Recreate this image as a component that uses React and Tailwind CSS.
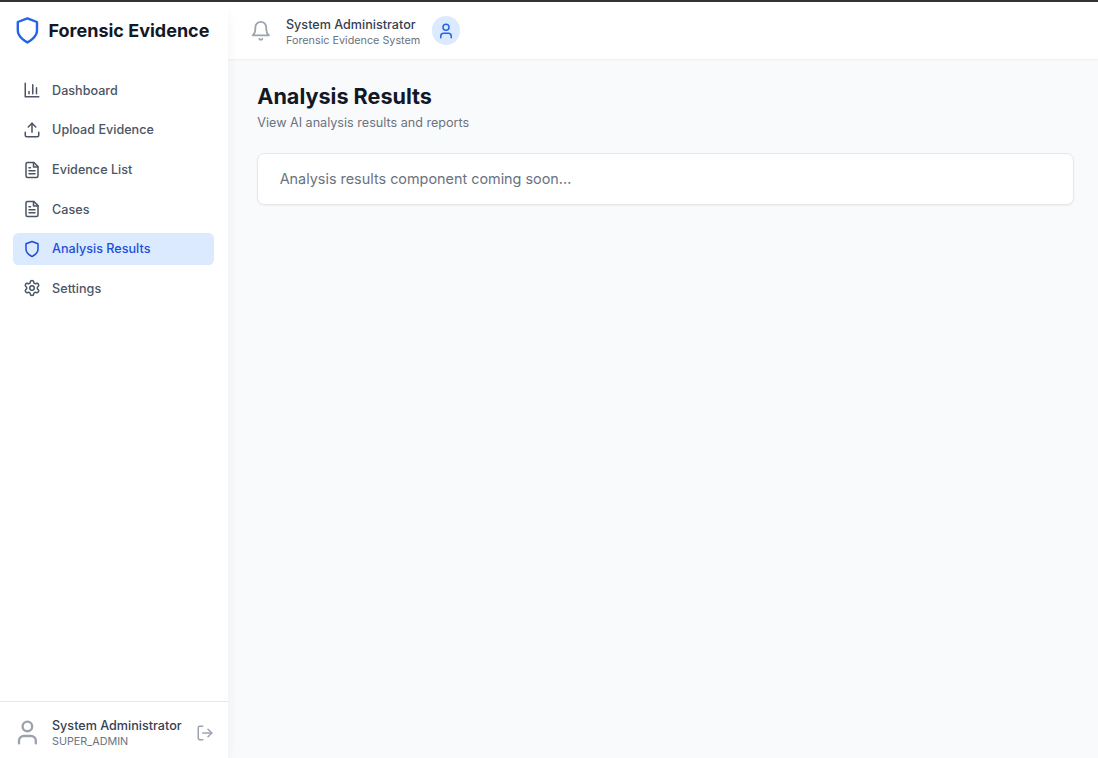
import React from "react";
import { LogOut, Settings, Upload, User } from "lucide-react";

function Icon({ className, children }) {
  return (
    <svg className={className} viewBox="0 0 24 24" fill="none" stroke="currentColor" strokeWidth="2" strokeLinecap="round" strokeLinejoin="round">
      {children}
    </svg>
  );
}

function BarChart({ className }) {
  return (
    <Icon className={className}>
      <path d="M3 3v18h18M18 17V9M13 17V5M8 17v-3" />
    </Icon>
  );
}

function Shield({ className }) {
  return (
    <Icon className={className}>
      <path d="M12 22s8-4 8-10V5l-8-3-8 3v7c0 6 8 10 8 10" />
    </Icon>
  );
}

function Bell({ className }) {
  return (
    <Icon className={className}>
      <path d="M6 8a6 6 0 0 1 12 0c0 7 3 9 3 9H3s3-2 3-9" />
      <path d="M10.3 21a1.94 1.94 0 0 0 3.4 0" />
    </Icon>
  );
}

function FileText({ className }) {
  return (
    <Icon className={className}>
      <path d="M14.5 2H6a2 2 0 0 0-2 2v16a2 2 0 0 0 2 2h12a2 2 0 0 0 2-2V7.5L14.5 2z" />
      <path d="M14 2v6h6M16 13H8M16 17H8M10 9H8" />
    </Icon>
  );
}

const items = [
  { label: "Dashboard", ItemIcon: BarChart },
  { label: "Upload Evidence", ItemIcon: Upload },
  { label: "Evidence List", ItemIcon: FileText },
  { label: "Cases", ItemIcon: FileText },
  { label: "Analysis Results", ItemIcon: Shield, active: true },
  { label: "Settings", ItemIcon: Settings },
];

function Sidebar() {
  return (
    <aside className="z-10 flex w-[228.4px] shrink-0 flex-col bg-white shadow-[0_9px_13.5px_-2.7px_rgba(0,0,0,0.1),0_3.6px_5.4px_-3.6px_rgba(0,0,0,0.1)]">
      <div className="flex h-[57.6px] shrink-0 items-center pl-[12.6px]">
        <Shield className="size-[28.8px] shrink-0 text-[#2563eb]" />
        <h1 className="ml-[7.1px] whitespace-nowrap text-[18px] font-bold leading-[25.2px] text-[#111827]">Forensic Evidence</h1>
      </div>
      <nav className="mt-[14.6px] flex flex-1 flex-col gap-[7.2px] pl-[12.5px] pr-[14.4px]">
        {items.map(({ label, ItemIcon, active }) => (
          <a
            key={label}
            className={`flex h-[32.4px] items-center gap-[10.8px] rounded-[5.4px] px-[10.8px] text-[12.6px] font-medium ${active ? "bg-[#dbeafe] text-[#1d4ed8]" : "text-[#4b5563]"}`}
          >
            <ItemIcon className="size-[18px] shrink-0" />
            <span className="pt-[1.8px]">{label}</span>
          </a>
        ))}
      </nav>
      <div className="flex h-[56.7px] shrink-0 items-center border-t border-[#e5e7eb] pl-[12.6px] pr-[14.4px] pt-[5px]">
        <User className="size-[28.8px] shrink-0 text-[#9ca3af]" />
        <div className="ml-[10.6px] flex-1 whitespace-nowrap pt-[2px]">
          <p className="text-[12.6px] font-medium leading-[18px] text-[#374151]">System Administrator</p>
          <p className="text-[10.8px] leading-[14.4px] text-[#6b7280]">SUPER_ADMIN</p>
        </div>
        <LogOut className="size-[18px] shrink-0 text-[#9ca3af]" />
      </div>
    </aside>
  );
}

export default function App() {
  return (
    <div className="flex h-screen flex-col overflow-hidden bg-[#f9fafb] font-['Inter',sans-serif]">
      <div className="h-[2px] shrink-0 bg-[#333333]" />
      <div className="flex min-h-0 flex-1">
        <Sidebar />
        <div className="flex min-w-0 flex-1 flex-col">
          <header className="flex h-[57.4px] shrink-0 items-center bg-white pl-[21.6px] shadow-xs">
            <Bell className="size-[21.6px] text-[#9ca3af]" />
            <div className="ml-[14.4px] whitespace-nowrap pt-[3px]">
              <p className="text-[12.6px] font-medium leading-[18px] text-[#374151]">System Administrator</p>
              <p className="text-[10.8px] leading-[14.4px] text-[#6b7280]">Forensic Evidence System</p>
            </div>
            <div className="ml-[11.2px] flex size-[28.8px] items-center justify-center rounded-full bg-[#dbeafe]">
              <User className="size-[18px] text-[#2563eb]" />
            </div>
          </header>
          <main className="flex-1 pl-[28.9px] pr-[24px] pt-[22.8px]">
            <h2 className="text-[21.6px] font-bold leading-[28.8px] text-[#111827]">Analysis Results</h2>
            <p className="mt-[2.6px] text-[12.6px] leading-[18px] text-[#6b7280]">View AI analysis results and reports</p>
            <section className="mt-[21.4px] rounded-[7.2px] border border-[#e5e7eb] bg-white px-[21.4px] pb-[14.8px] pt-[13.8px] shadow-xs">
              <p className="text-[14.4px] leading-[21.6px] text-[#6b7280]">Analysis results component coming soon...</p>
            </section>
          </main>
        </div>
      </div>
    </div>
  );
}
